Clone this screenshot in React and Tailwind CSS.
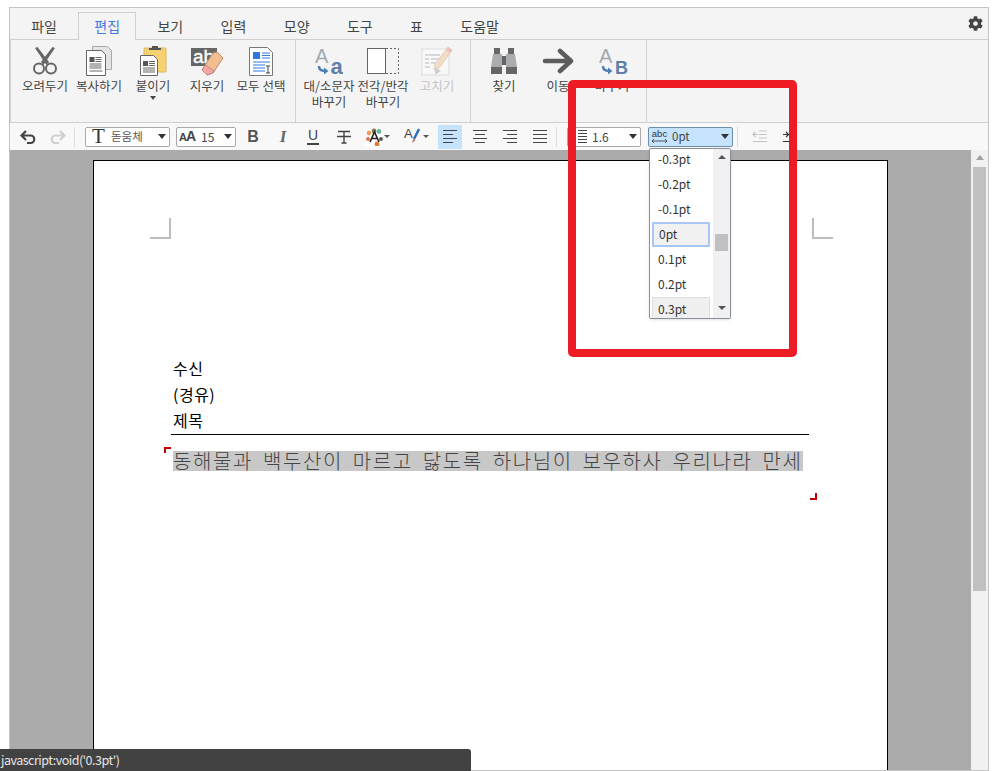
import React from 'react';
import { FaCog } from 'react-icons/fa';

const tabs = ['파일', '편집', '보기', '입력', '모양', '도구', '표', '도움말'];
const spacingItems = ['-0.3pt', '-0.2pt', '-0.1pt', '0pt', '0.1pt', '0.2pt', '0.3pt'];

const Caret = () => (
  <span className="w-0 h-0 border-x-[4px] border-x-transparent border-t-[5px] border-t-[#333]" />
);

const DocLines = ({ x, y }) => (
  <g>
    <rect x={x} y={y} width="5" height="5" fill="#555" />
    <path d={`M${x + 6} ${y + 0.5}h6M${x + 6} ${y + 2.5}h6M${x + 6} ${y + 4.5}h6M${x} ${y + 7}h12M${x} ${y + 9}h12M${x} ${y + 11}h12`} stroke="#666" strokeWidth="1" fill="none" />
  </g>
);

const icons = {
  cut: (
    <svg width="32" height="32" viewBox="0 0 32 32">
      <path d="M6 3 L8.500 2 L20 17 L17.500 20 Z" fill="#666" />
      <path d="M26 3 L23.500 2 L12 17 L14.500 20 Z" fill="#666" />
      <circle cx="10" cy="23.500" r="5" fill="none" stroke="#666" strokeWidth="2" />
      <circle cx="22" cy="23.500" r="5" fill="none" stroke="#666" strokeWidth="2" />
    </svg>
  ),
  copy: (
    <svg width="32" height="32" viewBox="0 0 32 32">
      <path d="M9.500 1.500h15l4 4v19h-19z" fill="#e4e4e4" stroke="#aaa" />
      <path d="M3.500 5.500h15l4 4v21h-19z" fill="#fff" stroke="#666" />
      <DocLines x={6.5} y={12} />
      <path d="M6.500 26h13" stroke="#666" />
    </svg>
  ),
  paste: (
    <svg width="32" height="32" viewBox="0 0 32 32">
      <rect x="7" y="3" width="22" height="24" rx="1" fill="#f6d16f" stroke="#d9b860" />
      <path d="M12 5V3h3V1h6v2h3v2z" fill="#555" />
      <path d="M3.500 10.500h13l4 4v16h-17z" fill="#fff" stroke="#666" />
      <DocLines x={6} y={16} />
    </svg>
  ),
  erase: (
    <svg width="32" height="32" viewBox="0 0 32 32" overflow="visible">
      <rect x="0" y="3" width="26" height="18" fill="#666" />
      <text x="2" y="18" fontFamily="Liberation Sans" fontSize="19" fill="#fff" stroke="#fff" strokeWidth="0.400">ab</text>
      <path d="M22 8 L26 7 L32 13 L22 28 L16 30 L11 25 Z" fill="#f2bd8f" stroke="#c08a68" />
      <path d="M14.500 20 L23 26 L22 28 L16 30 L11 25 Z" fill="#f3a7a5" stroke="#c08a80" />
    </svg>
  ),
  selectAll: (
    <svg width="32" height="32" viewBox="0 0 32 32">
      <path d="M4.500 2.500h18l5 5v23h-23z" fill="#fff" stroke="#777" />
      <rect x="8" y="7" width="7" height="7" fill="#2f78e0" />
      <path d="M17 8h8M17 10.500h8M17 13h8M8 17h17M8 20h12M8 23h12M8 26h12" stroke="#2f78e0" strokeWidth="1" />
      <path d="M21 21h4M23 21v7M21 28h4" stroke="#444" strokeWidth="1" fill="none" />
    </svg>
  ),
  caseChange: (
    <svg width="32" height="32" viewBox="0 0 32 32" overflow="visible">
      <text x="2" y="18" fontFamily="Liberation Sans" fontSize="20" fill="#a3a9b1">A</text>
      <path d="M6 21c0 4 3 5 6 5" stroke="#4d7fb5" strokeWidth="2.400" fill="none" />
      <path d="M11 22.500l4.500 3.500-4.500 3.500z" fill="#4d7fb5" />
      <text x="17.500" y="29" fontFamily="Liberation Sans" fontSize="22" fontWeight="700" fill="#5f7ea8">a</text>
    </svg>
  ),
  width: (
    <svg width="32" height="32" viewBox="0 0 32 32">
      <rect x="0.500" y="3.500" width="18" height="25" fill="#fff" stroke="#666" />
      <path d="M19 3.500h12.500v25H19" fill="none" stroke="#666" strokeDasharray="2 2" />
    </svg>
  ),
  fix: (
    <svg width="32" height="32" viewBox="0 0 32 32">
      <rect x="1" y="4" width="27" height="26" fill="#f8f8f8" stroke="#ddd" />
      <path d="M4 10h15M4 14h4M10 14h9M4 18h4M10 18h5M4 22h5" stroke="#c9ced6" strokeWidth="1.500" />
      <path d="M27 2l4 3-12 17-6 3 1-6z" fill="#f3dcc4" stroke="#e3d2c2" />
      <path d="M27 2l4 3-2 3-4-3z" fill="#efbcb8" />
      <path d="M14 22l6 4-6 4z" fill="#cfcfcf" />
    </svg>
  ),
  find: (
    <svg width="32" height="32" viewBox="0 0 32 32">
      <path d="M6 3h6v6H6zM20 3h6v6h-6z" fill="#666" />
      <path d="M5 9h9v13H3zM18 9h9l2 13H18z" fill="#a9adb0" />
      <path d="M14 11h4v9h-4z" fill="#666" />
      <path d="M3 22h11v7H3zM18 22h11v7H18z" fill="#666" />
    </svg>
  ),
  goto: (
    <svg width="32" height="32" viewBox="0 0 32 32">
      <path d="M3 16h25M18 6l11 10-11 10" fill="none" stroke="#5c5c5c" strokeWidth="4.500" strokeLinecap="round" strokeLinejoin="round" />
    </svg>
  ),
  replace: (
    <svg width="32" height="32" viewBox="0 0 32 32" overflow="visible">
      <text x="3" y="18" fontFamily="Liberation Sans" fontSize="20" fill="#a3a9b1">A</text>
      <path d="M7 21c0 4 3 5 6 5" stroke="#4d7fb5" strokeWidth="2.400" fill="none" />
      <path d="M12 22.500l4.500 3.500-4.500 3.500z" fill="#4d7fb5" />
      <text x="19" y="29" fontFamily="Liberation Sans" fontSize="18" fontWeight="700" fill="#5f7ea8">B</text>
    </svg>
  ),
};

const RibbonButton = ({ icon, label, disabled, caret }) => (
  <div className={`w-[54px] flex flex-col items-center pt-[5px] text-[12.5px] leading-[16px] text-center ${disabled ? 'text-[#c4c4c4]' : 'text-[#444]'}`}>
    {icons[icon]}
    <div className="mt-[1px] whitespace-pre-line">{label}</div>
    {caret && <span className="mt-[2px] w-0 h-0 border-x-[3px] border-x-transparent border-t-[4px] border-t-[#444]" />}
  </div>
);

const RibbonGroup = ({ className, children }) => (
  <div className={`flex border-r border-[#d2d2d2] ${className}`}>{children}</div>
);

const ToolSelect = ({ className, children }) => (
  <div className={`h-[20px] flex items-center rounded-[2px] border border-[#a9a9a9] bg-white text-[#444] ${className}`}>
    {children}
  </div>
);

const ToolButton = ({ className = 'w-[30px]', children }) => (
  <div className={`h-[24px] flex items-center justify-center ${className}`}>{children}</div>
);

const Lines = ({ d, color = '#444' }) => (
  <svg width="16" height="15" viewBox="0 0 16 15">
    <path d={d} stroke={color} strokeWidth="1.200" fill="none" />
  </svg>
);

const Divider = ({ className }) => <div className={`w-px h-[20px] bg-[#dcdcdc] ${className}`} />;

const CropMark = ({ className }) => <div className={`w-[21px] h-[21px] border-[#bdbdbd] ${className}`} />;

export default function App() {
  return (
    <div className="relative h-[771px] w-[996px] overflow-hidden bg-white" style={{ fontFamily: '"Noto Sans CJK KR", sans-serif' }}>
      <div className="ml-[9px] pt-[7px] w-[980px] h-[771px]">
        <div className="h-[764px] flex flex-col border border-[#c4c4c4] overflow-hidden">
          {/* tabs */}
          <div className="h-[31px] shrink-0 flex items-end justify-between bg-[#f4f4f4]">
            <div className="flex gap-[5px] pl-[5px] h-[28px] relative top-[1px]">
              {tabs.map((t) => (
                <div
                  key={t}
                  className={`px-[15.2px] leading-[26px] text-[14px] border border-b-0 ${t === '편집' ? 'border-[#cfcfcf] bg-[#f4f4f4] text-[#3f78e0] relative z-10' : 'border-transparent text-[#444]'}`}
                >
                  {t}
                </div>
              ))}
            </div>
            <FaCog className="self-start mt-[8px] mr-[5px] text-[#444]" size={15} />
          </div>

          {/* ribbon */}
          <div className="h-[84px] shrink-0 flex border-y border-l border-[#cfcfcf] bg-[#f4f4f4]">
            <RibbonGroup className="pl-[7px] pr-[7px]">
              <RibbonButton icon="cut" label="오려두기" />
              <RibbonButton icon="copy" label="복사하기" />
              <RibbonButton icon="paste" label="붙이기" caret />
              <RibbonButton icon="erase" label="지우기" />
              <RibbonButton icon="selectAll" label="모두 선택" />
            </RibbonGroup>
            <RibbonGroup className="px-[6px]">
              <RibbonButton icon="caseChange" label={'대/소문자\n바꾸기'} />
              <RibbonButton icon="width" label={'전각/반각\n바꾸기'} />
              <RibbonButton icon="fix" label="고치기" disabled />
            </RibbonGroup>
            <RibbonGroup className="pl-[6px] pr-[7px]">
              <RibbonButton icon="find" label="찾기" />
              <RibbonButton icon="goto" label="이동" />
              <RibbonButton icon="replace" label="바꾸기" />
            </RibbonGroup>
          </div>

          {/* toolbar */}
          <div className="h-[27px] shrink-0 flex items-center pl-[3px] bg-[#f8f8f8] text-[#444]">
            <ToolButton>
              <svg width="18" height="16" viewBox="0 0 18 16">
                <path d="M7 2L2.500 6.500 7 11M3 6.500h8.500a3.700 3.700 0 0 1 0 7.500H8" fill="none" stroke="#444" strokeWidth="2.200" />
              </svg>
            </ToolButton>
            <ToolButton>
              <svg width="18" height="16" viewBox="0 0 18 16">
                <path d="M11 2l4.500 4.500L11 11M15 6.500H6.500a3.700 3.700 0 0 0 0 7.500H10" fill="none" stroke="#cfcfcf" strokeWidth="2.200" />
              </svg>
            </ToolButton>
            <Divider className="ml-[1px]" />
            <ToolSelect className="ml-[10px] w-[85px] pl-[4px] pr-[3px] text-[12px]">
              <span className="w-[17px] text-[21px] leading-none text-center text-[#333]" style={{ fontFamily: '"Liberation Serif", serif' }}>T</span>
              <span className="ml-[4px] flex-1 text-[11.500px] text-[#555]">돋움체</span>
              <Caret />
            </ToolSelect>
            <ToolSelect className="ml-[6px] w-[60px] pl-[2px] pr-[3px] text-[12px]">
              <span className="w-[20px] text-[14px] font-bold tracking-[-1px] text-[#444]" style={{ fontFamily: '"Liberation Sans", sans-serif' }}>
                <span className="text-[11px]">A</span>A
              </span>
              <span className="ml-[2px] flex-1">15</span>
              <Caret />
            </ToolSelect>
            <ToolButton className="ml-[2px] w-[30px] text-[16px] font-bold text-[#555]"><span style={{ fontFamily: '"Liberation Sans", sans-serif' }}>B</span></ToolButton>
            <ToolButton className="w-[30px] text-[17px] font-bold italic text-[#666]"><span style={{ fontFamily: '"Liberation Serif", serif' }}>I</span></ToolButton>
            <ToolButton className="w-[30px] text-[14px] text-[#444]">
              <span className="border-b-2 border-[#444] leading-[15px] px-[1px]" style={{ fontFamily: '"Liberation Sans", sans-serif' }}>U</span>
            </ToolButton>
            <ToolButton className="w-[30px] pl-[1px]">
              <svg width="14" height="14" viewBox="0 0 14 14">
                <path d="M1 1.500h12M7 1.500V13M4.500 13h5M0 6.500h14" stroke="#444" strokeWidth="1.400" fill="none" />
              </svg>
            </ToolButton>
            <ToolButton className="w-[34px] pl-[8px] justify-start">
              <svg width="25" height="18" viewBox="0 0 25 18">
                <rect x="0" y="1" width="17" height="17" fill="#fff" />
                <circle cx="3" cy="5" r="2.400" fill="#e8a25a" />
                <circle cx="8" cy="3" r="2.400" fill="#8a7a5c" />
                <circle cx="13" cy="3.500" r="2.400" fill="#6bb89a" />
                <circle cx="2" cy="11" r="2" fill="#e46f4a" />
                <circle cx="15" cy="11" r="2" fill="#5a5a5a" />
                <circle cx="11" cy="16" r="2.400" fill="#e07a36" />
                <path d="M4 14l4.500-10 4.500 10M5.500 10.500h6" stroke="#222" strokeWidth="1.600" fill="none" />
                <path d="M18 7h6l-3 3z" fill="#555" />
              </svg>
            </ToolButton>
            <ToolButton className="ml-[5px] w-[36px]">
              <svg width="30" height="18" viewBox="0 0 30 18" overflow="visible">
                <text x="4" y="10" fontFamily="Liberation Sans" fontSize="13" fill="#444">A</text>
                <path d="M19 1l-5 10" stroke="#2f6fc0" strokeWidth="2.500" />
                <path d="M13.500 11l-1.500 4 3.500-3z" fill="#c8553a" />
                <path d="M23 7h6l-3 3z" fill="#555" />
              </svg>
            </ToolButton>
            <ToolButton className="ml-[5px] w-[24px] bg-[#c5e3fd]">
              <Lines d="M1 1.500h14M1 5.500h10M1 9.500h14M1 13.500h10" />
            </ToolButton>
            <ToolButton className="ml-[6px] w-[24px]">
              <Lines d="M1 1.500h14M3 5.500h10M1 9.500h14M3 13.500h10" />
            </ToolButton>
            <ToolButton className="ml-[6px] w-[24px]">
              <Lines d="M1 1.500h14M5 5.500h10M1 9.500h14M5 13.500h10" />
            </ToolButton>
            <ToolButton className="ml-[6px] w-[24px]">
              <Lines d="M1 1.500h14M1 5.500h14M1 9.500h14M1 13.500h14" />
            </ToolButton>
            <Divider className="ml-[4px]" />
            <ToolSelect className="ml-[10px] w-[74px] pl-[9px] pr-[3px] text-[12px]">
              <Lines d="M1 1.500h9M1 4.500h9M1 7.500h9M1 10.500h9M1 13.500h9" />
              <span className="flex-1 ml-[-1px]">1.6</span>
              <Caret />
            </ToolSelect>
            <ToolSelect className="ml-[7px] w-[85px] pl-[2px] pr-[3px] !bg-[#c5e3fd] !border-[#6f8ea8] text-[11.500px]">
              <span className="w-[17px] flex flex-col items-center text-[9.500px] leading-[9px] text-[#333]" style={{ fontFamily: '"Liberation Sans", sans-serif' }}>
                abc
                <svg width="17" height="6" viewBox="0 0 17 6">
                  <path d="M1 3h15M3 1L1 3l2 2M14 1l2 2-2 2" fill="none" stroke="#333" strokeWidth="0.800" />
                </svg>
              </span>
              <span className="ml-[4px] flex-1">0pt</span>
              <Caret />
            </ToolSelect>
            <Divider className="ml-[4px]" />
            <ToolButton className="ml-[7px] w-[30px]">
              <Lines d="M7 2h8M7 5.500h8M7 9h8M1 12.500h14M1 5.500h5M3.500 3L1 5.500 3.500 8" color="#c4c4c4" />
            </ToolButton>
            <ToolButton className="w-[30px]">
              <Lines d="M7 2h8M7 5.500h8M7 9h8M1 12.500h14M1 5.500h5M4 3l2.500 2.500L4 8" color="#333" />
            </ToolButton>
          </div>

          {/* workspace */}
          <div className="flex-1 min-h-0 flex bg-[#ababab]">
            <div className="flex-1 min-w-0 pl-[83px] pt-[10px] overflow-hidden">
              <div className="w-[795px] h-[700px] border border-black bg-white pt-[57px] pl-[56px]">
                <div className="flex justify-between w-[683px]">
                  <CropMark className="border-r-2 border-b-2" />
                  <CropMark className="border-l-2 border-b-2" />
                </div>
                <div className="ml-[23px] mt-[116px] text-[16px] leading-[26px] tracking-[0.5px] text-black">
                  <div>수신</div>
                  <div>(경유)</div>
                  <div>제목</div>
                </div>
                <div className="ml-[21px] mt-[1px] w-[638px] h-px bg-black" />
                <div className="relative ml-[23px] mt-[16px] w-[630px] h-[20px] bg-[#c8c8c8] text-[20px] leading-[20px] font-light text-[#444] tracking-[1.600px] [word-spacing:3.900px] whitespace-nowrap">
                  동해물과 백두산이 마르고 닳도록 하나님이 보우하사 우리나라 만세
                  <div className="absolute left-[-9px] top-[-4px] w-[7px] h-[6px] border-l-2 border-t-2 border-[#c00000]" />
                  <div className="absolute left-[637px] top-[42px] w-[7px] h-[7px] border-r-2 border-b-2 border-[#c00000]" />
                </div>
              </div>
            </div>
            {/* page scrollbar */}
            <div className="w-[17px] shrink-0 bg-[#f1f1f1] flex flex-col items-center">
              <span className="mt-[5px] w-0 h-0 border-x-[4px] border-x-transparent border-b-[5px] border-b-[#a3a3a3]" />
              <div className="mt-[7px] w-[13px] h-[424px] bg-[#c0c0c0]" />
            </div>
          </div>
        </div>
      </div>

      {/* letter spacing dropdown */}
      <div className="absolute left-[649px] top-[148px] w-[82px] h-[171px] flex bg-white border border-[#8a9099] rounded-[2px] shadow-sm overflow-hidden text-[12px] text-[#333]">
        <div className="w-[63px] pl-[2px] mt-[-2px]">
          {spacingItems.map((item) => (
            <div
              key={item}
              className={`h-[25px] pl-[5px] w-[58px] ${item === '0pt' ? 'leading-[19px] border-2 bg-[#f1f1f1] border-[#a9c6f8] rounded-[1px]' : item === '0.3pt' ? 'leading-[21px] border bg-[#f0f0f0] border-[#dedede]' : 'leading-[21px] border border-transparent'}`}
            >
              {item}
            </div>
          ))}
        </div>
        <div className="flex-1 bg-[#f1f1f1] flex flex-col items-center pt-[6px] relative">
          <span className="w-0 h-0 border-x-[4px] border-x-transparent border-b-[4px] border-b-[#555]" />
          <div className="mt-[75px] w-[13px] h-[17px] bg-[#c0c0c0]" />
          <span className="mt-[55px] w-0 h-0 border-x-[4px] border-x-transparent border-t-[4px] border-t-[#555]" />
        </div>
      </div>

      {/* red annotation */}
      <div className="absolute left-[568px] top-[80px] w-[229px] h-[277px] border-[8.500px] border-[#ed1c24] rounded-[5px]" />

      {/* link status */}
      <div className="absolute left-0 bottom-0 w-[471px] h-[22px] pl-[1px] bg-[#424242] rounded-tr-[3px] text-[12.500px] tracking-[-0.5px] leading-[22px] text-[#e6e6e6]">
        javascript:void('0.3pt')
      </div>
    </div>
  );
}
